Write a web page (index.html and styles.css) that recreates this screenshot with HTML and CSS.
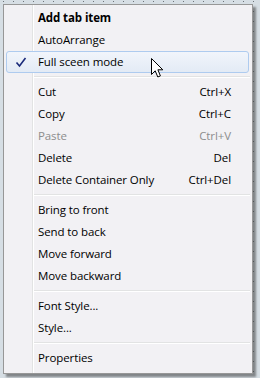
FILE: index.html
```html
<!DOCTYPE html>
<html lang="en">
<head>
<meta charset="UTF-8">
<meta name="viewport" content="width=device-width, initial-scale=1.0">
<title>Context Menu</title>
<link rel="stylesheet" href="styles.css">
</head>
<body>
<div class="menu">
  <div class="item bold">Add tab item</div>
  <div class="item">AutoArrange</div>
  <div class="item hover">
    <svg class="check" width="12" height="11" viewBox="0 0 12 11"><path d="M1.5 5.5 L4.5 9 L10.5 1" fill="none" stroke="#1a2a7a" stroke-width="1.6"/></svg>
    Full sceen mode
  </div>
  <div class="sep"></div>
  <div class="item"><span>Cut</span><span class="key">Ctrl+X</span></div>
  <div class="item"><span>Copy</span><span class="key">Ctrl+C</span></div>
  <div class="item disabled"><span>Paste</span><span class="key">Ctrl+V</span></div>
  <div class="item"><span>Delete</span><span class="key">Del</span></div>
  <div class="item"><span>Delete Container Only</span><span class="key">Ctrl+Del</span></div>
  <div class="sep"></div>
  <div class="item">Bring to front</div>
  <div class="item">Send to back</div>
  <div class="item">Move forward</div>
  <div class="item">Move backward</div>
  <div class="sep"></div>
  <div class="item">Font Style...</div>
  <div class="item">Style...</div>
  <div class="sep"></div>
  <div class="item">Properties</div>
</div>
<svg class="cursor" width="14" height="21" viewBox="0 0 14 21"><path d="M0.5 0.5 L0.5 16.5 L4.2 12.8 L6.8 19 L9.4 17.9 L6.9 11.8 L11.8 11.8 Z" fill="#fff" stroke="#000" stroke-width="1" stroke-linejoin="miter"/></svg>
</body>
</html>
```
FILE: styles.css
```css
/* context menu over a dotted design surface */
body {
  margin: 0;
  width: 260px;
  height: 378px;
  overflow: hidden;
  background-color: #d6dee4;
  background-image: radial-gradient(circle at 3.5px 1.5px, #6c737a 0.7px, transparent 0.9px);
  background-size: 10px 10px;
  font-family: "Open Sans", "Noto Sans", Arial, sans-serif;
  font-size: 11.5px;
  letter-spacing: -0.1px;
  color: #000;
  position: relative;
}

.menu {
  margin: 4px 0 0 3px;
  width: 248px;
  height: 366px;
  padding-top: 2px;
  box-sizing: content-box;
  border: 1px solid #979797;
  background-color: #f2f1f4;
  background-image: linear-gradient(to right, transparent 28px, #e2e3e3 28px, #e2e3e3 29px, #fff 29px, #fff 30px, transparent 30px);
  box-shadow: 3px 3px 2px rgba(60, 60, 60, 0.55);
}

.item {
  height: 22px;
  line-height: 22px;
  padding: 0 21px 0 34px;
  display: flex;
  justify-content: space-between;
  white-space: nowrap;
}

.bold {
  font-weight: bold;
}

.disabled {
  color: #8d8d8d;
}

.hover {
  position: relative;
  margin: 0 3px 0 2px;
  height: 20px;
  line-height: 20px;
  padding-left: 31px;
  justify-content: flex-start;
  border: 1px solid #aecbef;
  border-radius: 3px;
  background: linear-gradient(#f1f5fb, #e3ebf5);
}

.check {
  position: absolute;
  left: 8px;
  top: 5px;
}

.sep {
  height: 8px;
  margin-left: 30px;
  margin-right: 2px;
  background: linear-gradient(transparent 3px, #e2e3e3 3px, #e2e3e3 4px, #fff 4px, #fff 5px, transparent 5px);
}

.cursor {
  position: absolute;
  left: 151px;
  top: 58px;
}
```
